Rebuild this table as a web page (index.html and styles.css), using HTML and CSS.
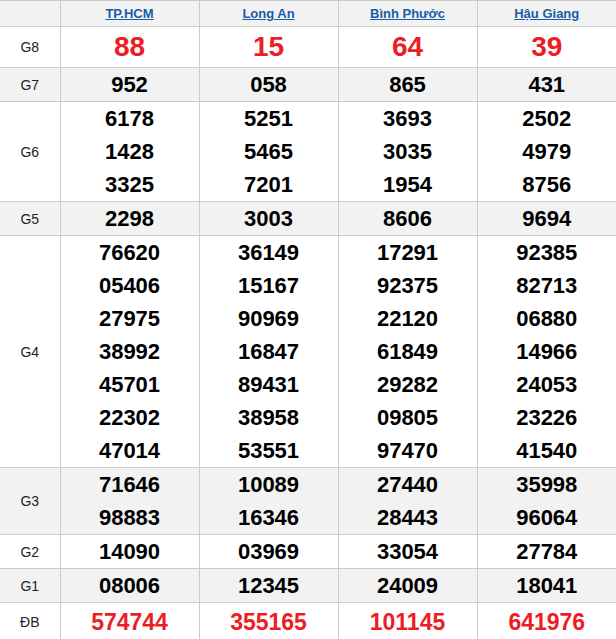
FILE: index.html
```html
<!DOCTYPE html>
<html lang="vi">
<head>
<meta charset="utf-8">
<title>Kết quả xổ số</title>
<link rel="stylesheet" href="styles.css">
</head>
<body>
<table class="kq">
  <colgroup>
    <col class="c-label">
    <col class="c-prov"><col class="c-prov"><col class="c-prov"><col class="c-prov">
  </colgroup>
  <thead>
    <tr class="head">
      <th></th>
      <th><a href="#">TP.HCM</a></th>
      <th><a href="#">Long An</a></th>
      <th><a href="#">Bình Phước</a></th>
      <th><a href="#">Hậu Giang</a></th>
    </tr>
  </thead>
  <tbody>
    <tr class="big">
      <td class="lbl">G8</td>
      <td class="red"><div>88</div></td>
      <td class="red"><div>15</div></td>
      <td class="red"><div>64</div></td>
      <td class="red"><div>39</div></td>
    </tr>
    <tr class="alt">
      <td class="lbl">G7</td>
      <td><div>952</div></td>
      <td><div>058</div></td>
      <td><div>865</div></td>
      <td><div>431</div></td>
    </tr>
    <tr>
      <td class="lbl">G6</td>
      <td><div>6178</div><div>1428</div><div>3325</div></td>
      <td><div>5251</div><div>5465</div><div>7201</div></td>
      <td><div>3693</div><div>3035</div><div>1954</div></td>
      <td><div>2502</div><div>4979</div><div>8756</div></td>
    </tr>
    <tr class="alt">
      <td class="lbl">G5</td>
      <td><div>2298</div></td>
      <td><div>3003</div></td>
      <td><div>8606</div></td>
      <td><div>9694</div></td>
    </tr>
    <tr>
      <td class="lbl">G4</td>
      <td><div>76620</div><div>05406</div><div>27975</div><div>38992</div><div>45701</div><div>22302</div><div>47014</div></td>
      <td><div>36149</div><div>15167</div><div>90969</div><div>16847</div><div>89431</div><div>38958</div><div>53551</div></td>
      <td><div>17291</div><div>92375</div><div>22120</div><div>61849</div><div>29282</div><div>09805</div><div>97470</div></td>
      <td><div>92385</div><div>82713</div><div>06880</div><div>14966</div><div>24053</div><div>23226</div><div>41540</div></td>
    </tr>
    <tr class="alt">
      <td class="lbl">G3</td>
      <td><div>71646</div><div>98883</div></td>
      <td><div>10089</div><div>16346</div></td>
      <td><div>27440</div><div>28443</div></td>
      <td><div>35998</div><div>96064</div></td>
    </tr>
    <tr>
      <td class="lbl">G2</td>
      <td><div>14090</div></td>
      <td><div>03969</div></td>
      <td><div>33054</div></td>
      <td><div>27784</div></td>
    </tr>
    <tr class="alt">
      <td class="lbl">G1</td>
      <td><div>08006</div></td>
      <td><div>12345</div></td>
      <td><div>24009</div></td>
      <td><div>18041</div></td>
    </tr>
    <tr class="db">
      <td class="lbl">ĐB</td>
      <td class="red"><div>574744</div></td>
      <td class="red"><div>355165</div></td>
      <td class="red"><div>101145</div></td>
      <td class="red"><div>641976</div></td>
    </tr>
  </tbody>
</table>
</body>
</html>
```

FILE: styles.css
```css
html, body {
  margin: 0;
  padding: 0;
  background: #ffffff;
}

body {
  font-family: "Liberation Sans", Arial, sans-serif;
  color: #000;
  overflow: hidden;
}

.kq {
  width: 616px;
  table-layout: fixed;
  border-collapse: collapse;
  border-spacing: 0;
}

.c-label { width: 60px; }
.c-prov { width: 139px; }

.kq th,
.kq td {
  padding: 0;
  border-top: 1px solid #cccccc;
  border-bottom: 1px solid #cccccc;
  border-left: 1px solid #cccccc;
  text-align: center;
  vertical-align: middle;
}

.kq th:first-child,
.kq td:first-child {
  border-left: none;
}

.head th {
  height: 25px;
  background: #f2f2f2;
  font-size: 13px;
  font-weight: bold;
  line-height: 25px;
}

.head a {
  color: #1a5ca8;
  text-decoration: underline;
}

.alt td {
  background: #f2f2f2;
}

.lbl {
  font-size: 14px;
  font-weight: normal;
  color: #222;
}

.kq td div {
  font-size: 22px;
  font-weight: bold;
  line-height: 33px;
  height: 33px;
}

.big td div {
  font-size: 28px;
  line-height: 40px;
  height: 40px;
}

.db td div {
  font-size: 23px;
  line-height: 38px;
  height: 38px;
}

.kq td.red div {
  color: #ee1c25;
}
```
